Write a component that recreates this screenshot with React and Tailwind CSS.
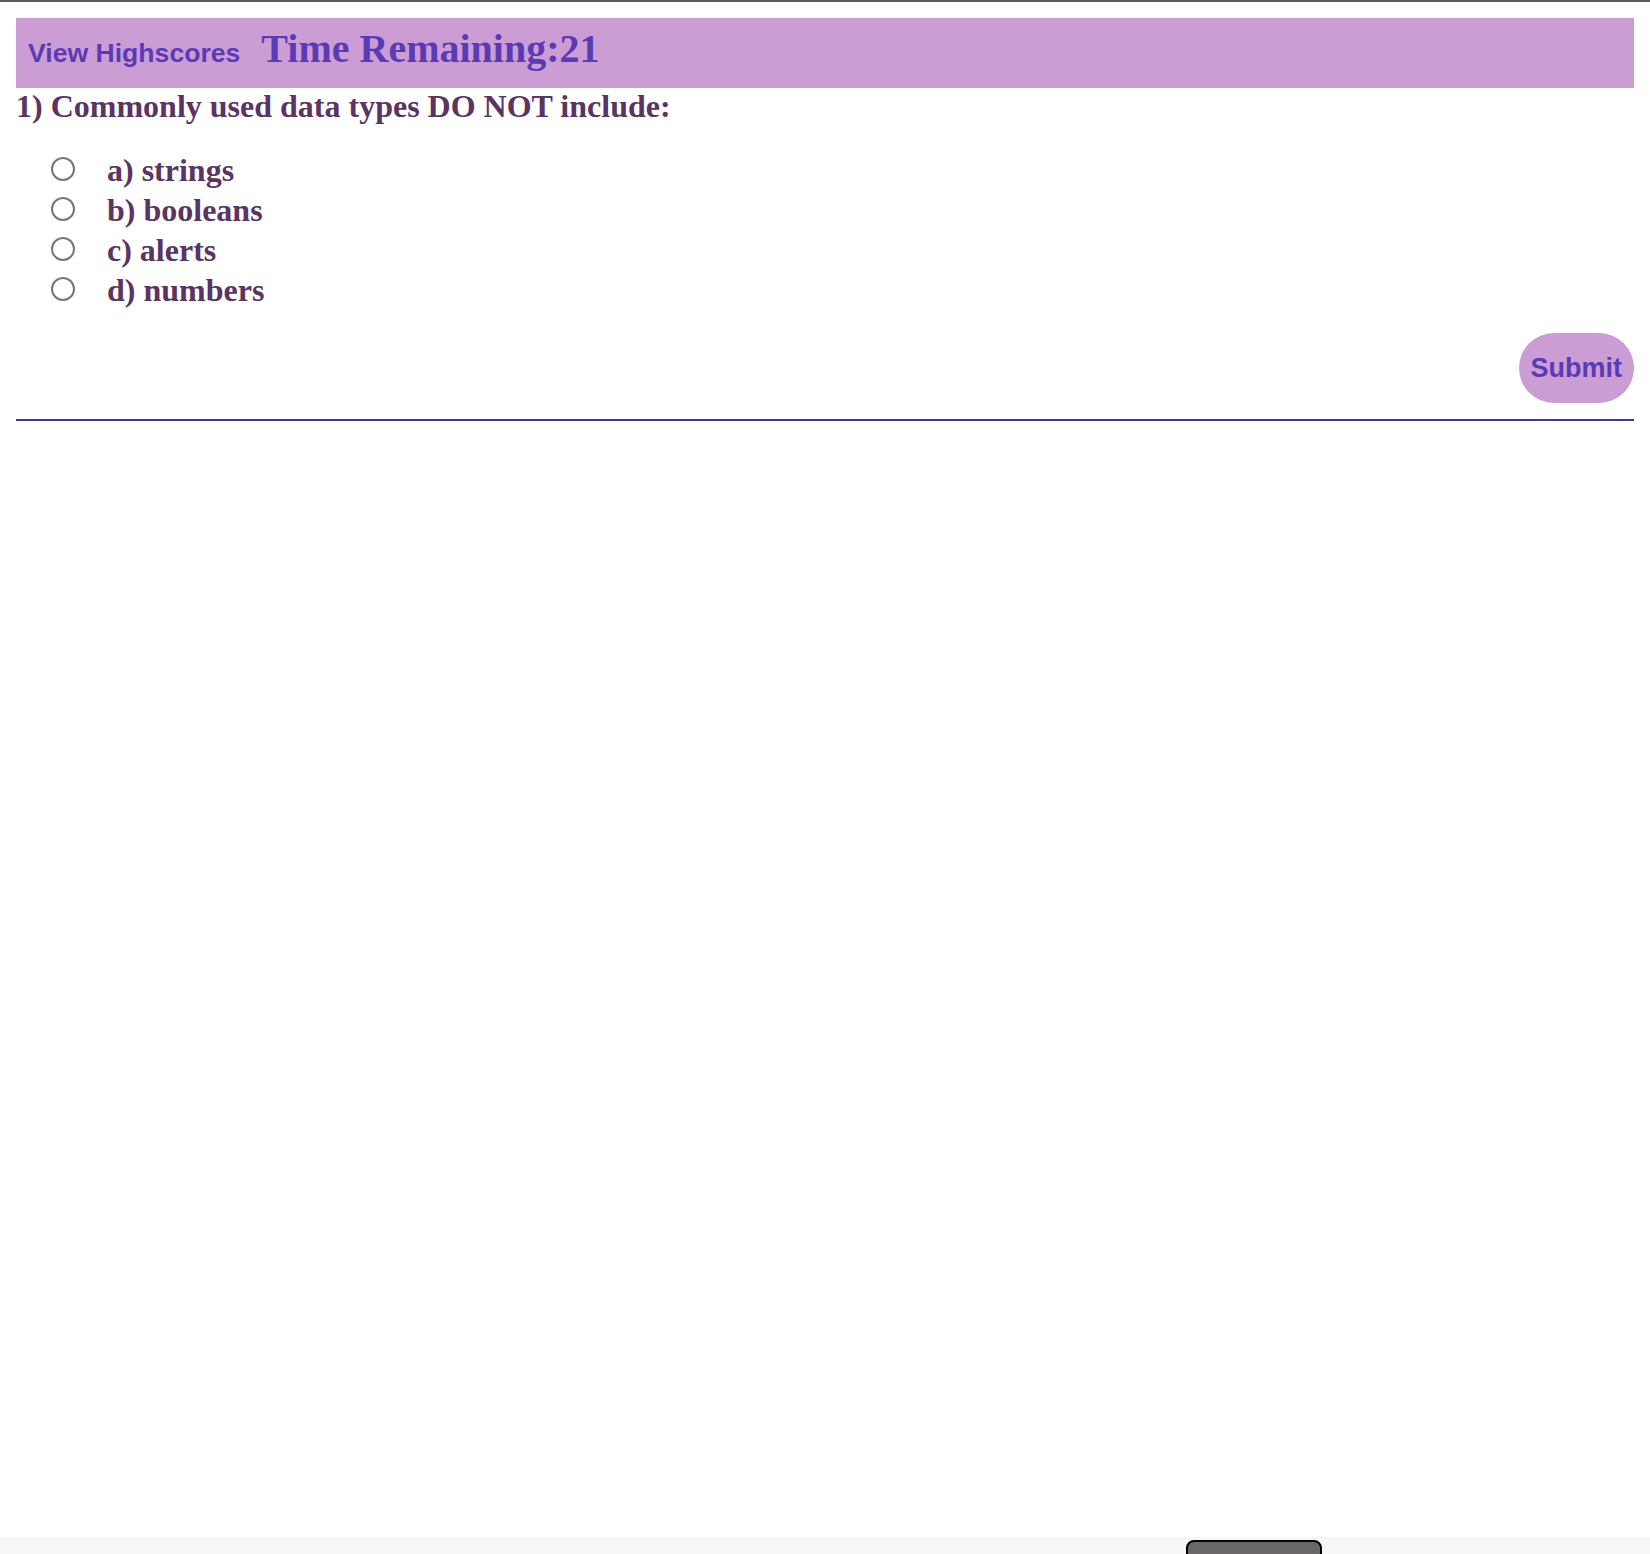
import { useState } from 'react';

const choices = ['a) strings', 'b) booleans', 'c) alerts', 'd) numbers'];

export default function App() {
  const [picked, setPicked] = useState(null);

  return (
    <div className="min-h-[1554px] w-full flex flex-col bg-white">
      {/* thin frame line at the very top */}
      <div className="h-[2px] w-full bg-[#5c5c60]" />

      <main className="px-4 pt-4">
        {/* ── header bar ───────────────────────────── */}
        <header className="h-[70px] flex items-baseline pl-3 pt-[8px] bg-[#cb9dd4]">
          <a className="font-['Liberation_Sans',Arial,sans-serif] font-bold text-[26.6px] text-[#5b3bb5] cursor-pointer">
            View Highscores
          </a>
          <h1 className="ml-[21px] font-['Liberation_Serif','Times_New_Roman',serif] font-bold text-[40px] leading-[46px] text-[#5b3bb5]">
            Time Remaining:21
          </h1>
        </header>

        {/* ── question ─────────────────────────────── */}
        <h2 className="font-['Liberation_Serif','Times_New_Roman',serif] font-bold text-[32px] leading-[37px] text-[#5a3463]">
          1) Commonly used data types DO NOT include:
        </h2>

        <ul className="mt-6 pl-[35px]">
          {choices.map((c, i) => (
            <li key={c} className="h-10 flex items-center">
              <button
                onClick={() => setPicked(i)}
                className="w-6 h-6 rounded-full border-2 border-[#767676] bg-white flex items-center justify-center"
              >
                {picked === i && <span className="w-3 h-3 rounded-full bg-[#5b3bb5]" />}
              </button>
              <span className="ml-[32px] pt-[2px] font-['Liberation_Serif','Times_New_Roman',serif] font-bold text-[32px] leading-[40px] text-[#5a3463]">
                {c}
              </span>
            </li>
          ))}
        </ul>

        <div className="mt-6 flex justify-end">
          <button className="h-[70px] px-[12px] rounded-full bg-[#cb9dd4] font-['Liberation_Sans',Arial,sans-serif] font-bold text-[27px] text-[#5b3bb5]">
            Submit
          </button>
        </div>

        <hr className="mt-4 border-0 border-t-2 border-[#4c2f9f]" />
      </main>

      <div className="flex-1" />

      {/* bottom strip with a partly hidden dark tab */}
      <div className="h-[17px] bg-[#f7f7f7] overflow-hidden">
        <div className="ml-[1186px] mt-[3px] w-[136px] h-5 rounded-t-lg border-2 border-black bg-[#6b6766]" />
      </div>
    </div>
  );
}
